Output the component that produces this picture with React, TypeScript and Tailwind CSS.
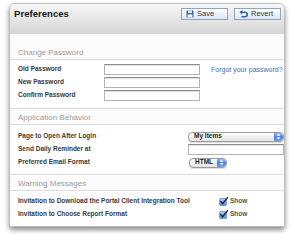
import React from "react";

const font = { fontFamily: '"Liberation Sans", Arial, sans-serif' };

function Stepper() {
  return (
    <span className="flex h-full w-[9px] items-center justify-center rounded-r-[4px] bg-gradient-to-b from-[#8fb6f2] via-[#3f7fe0] to-[#6fa2ee]">
      <svg width="5" height="7" viewBox="0 0 5 7" className="block">
        <path d="M2.5 0.5 L4.5 2.8 L0.5 2.8 Z" fill="#fff" />
        <path d="M2.5 6.5 L4.5 4.2 L0.5 4.2 Z" fill="#fff" />
      </svg>
    </span>
  );
}

function AquaSelect({ label, width }: { label: string; width: string }) {
  return (
    <div
      className={`flex h-[10px] ${width} shrink-0 items-center justify-between overflow-hidden rounded-[4px] border border-[#9a9a9a] bg-gradient-to-b from-white to-[#e4e4e4] shadow-[0_1px_1px_rgba(0,0,0,0.15)]`}
    >
      <span className="block pl-[5px] text-[6.5px] font-bold leading-none text-[#222]">{label}</span>
      <Stepper />
    </div>
  );
}

function TextInput({ width }: { width: string }) {
  return (
    <div
      className={`h-[11px] ${width} shrink-0 border border-[#b5b5b5] border-t-[#8c8c8c] bg-white shadow-[inset_0_1px_1px_rgba(0,0,0,0.12)]`}
    />
  );
}

function Check() {
  return (
    <svg width="9" height="9" viewBox="0 0 9 9" className="block shrink-0">
      <defs>
        <linearGradient id="cb" x1="0" y1="0" x2="0" y2="1">
          <stop offset="0" stopColor="#a9cdf7" />
          <stop offset="1" stopColor="#4d8fe0" />
        </linearGradient>
      </defs>
      <rect x="0.5" y="1.5" width="7" height="7" rx="1" fill="url(#cb)" stroke="#5577aa" strokeWidth="0.6" />
      <path d="M1.8 4.6 L3.6 6.8 L8.6 0.6" fill="none" stroke="#1c2a44" strokeWidth="1.5" strokeLinecap="round" strokeLinejoin="round" />
    </svg>
  );
}

function Label({ children, w }: { children: React.ReactNode; w?: string }) {
  return (
    <div className={`flex h-full items-center pl-[8px] ${w ?? ""} shrink-0`}>
      <span className="block whitespace-nowrap text-[6.5px] font-bold leading-none text-[#3a3a3a]">{children}</span>
    </div>
  );
}

function SectionHeader({ children }: { children: React.ReactNode }) {
  return (
    <div className="bg-[#fcfcfc] pb-[1px] pl-[8px] pt-[4px]">
      <div className="h-[10px] text-[8px] leading-[10px] text-[#9b9b9b]">{children}</div>
    </div>
  );
}

function Btn({ icon, label }: { icon: React.ReactNode; label: string }) {
  return (
    <div className="flex h-[12px] w-[47px] items-center gap-[3px] border border-[#8ea4c8] bg-gradient-to-b from-white to-[#dde6f3] pl-[4px]">
      {icon}
      <span className="block text-[7.5px] leading-none text-[#333]">{label}</span>
    </div>
  );
}

export default function App() {
  return (
    <div className="h-[240px] w-[295px] bg-white pl-[9px] pt-[3px]" style={font}>
      <div className="flex h-[224px] w-[276px] flex-col overflow-hidden rounded-b-[3px] rounded-t-[6px] border border-[#bdbdbd] bg-white shadow-[0_3px_5px_rgba(0,0,0,0.45)]">
        {/* header */}
        <div className="flex h-[30px] items-start justify-between bg-gradient-to-b from-[#f6f6f6] to-[#d6d6d6] pl-[4px] pr-[3px] pt-[3px]">
          <span className="block text-[9.6px] font-bold leading-[14px] text-[#1a1a1a]">Preferences</span>
          <div className="flex gap-[6px] pt-[1px]">
            <Btn
              label="Save"
              icon={
                <svg width="8" height="8" viewBox="0 0 8 8" className="block">
                  <rect x="0.5" y="0.5" width="7" height="7" rx="0.6" fill="#3f5f9a" />
                  <rect x="2" y="0.5" width="4" height="2.6" fill="#dfe8f5" />
                  <rect x="1.6" y="4.4" width="4.8" height="3.1" fill="#f4f7fb" />
                </svg>
              }
            />
            <Btn
              label="Revert"
              icon={
                <svg width="9" height="8" viewBox="0 0 9 8" className="block">
                  <path d="M3 2.2 H6 A2.3 2.3 0 0 1 6 6.8 H2.5" fill="none" stroke="#2f62b8" strokeWidth="1.6" />
                  <path d="M0.3 2.2 L3.4 0 L3.4 4.4 Z" fill="#2f62b8" />
                </svg>
              }
            />
          </div>
        </div>

        {/* body */}
        <div className="flex flex-1 flex-col bg-[#fcfcfc] pt-[10px]">
          <SectionHeader>Change Password</SectionHeader>
          <div className="flex border-y border-[#dedede] bg-white pb-[6px] pt-[3px]">
            <div className="flex flex-col">
              {["Old Password", "New Password", "Confirm Password"].map((l) => (
                <div key={l} className="flex h-[13px] items-center">
                  <Label w="w-[94px]">{l}</Label>
                  <TextInput width="w-[96px]" />
                </div>
              ))}
            </div>
            <div className="flex h-[13px] items-center pl-[11px]">
              <span className="block whitespace-nowrap text-[7px] leading-none text-[#5068b0]">Forgot your password?</span>
            </div>
          </div>

          <SectionHeader>Application Behavior</SectionHeader>
          <div className="flex flex-col border-y border-[#dedede] bg-white pb-[5px] pt-[5px]">
            <div className="flex h-[13px] items-center">
              <Label w="w-[178px]">Page to Open After Login</Label>
              <AquaSelect label="My Items" width="w-[96px]" />
            </div>
            <div className="flex h-[13px] items-center">
              <Label w="w-[178px]">Send Daily Reminder at</Label>
              <TextInput width="w-[96px]" />
            </div>
            <div className="flex h-[13px] items-center">
              <Label w="w-[179px]">Preferred Email Format</Label>
              <AquaSelect label="HTML" width="w-[38px]" />
            </div>
          </div>

          <SectionHeader>Warning Messages</SectionHeader>
          <div className="flex flex-1 flex-col border-t border-[#dedede] bg-white pt-[4px]">
            {[
              "Invitation to Download the Portal Client Integration Tool",
              "Invitation to Choose Report Format",
            ].map((l) => (
              <div key={l} className="flex h-[13px] items-center">
                <Label w="w-[209px]">{l}</Label>
                <Check />
                <span className="block pl-[2px] text-[6.5px] font-bold leading-none text-[#555]">Show</span>
              </div>
            ))}
          </div>
        </div>
      </div>
    </div>
  );
}
